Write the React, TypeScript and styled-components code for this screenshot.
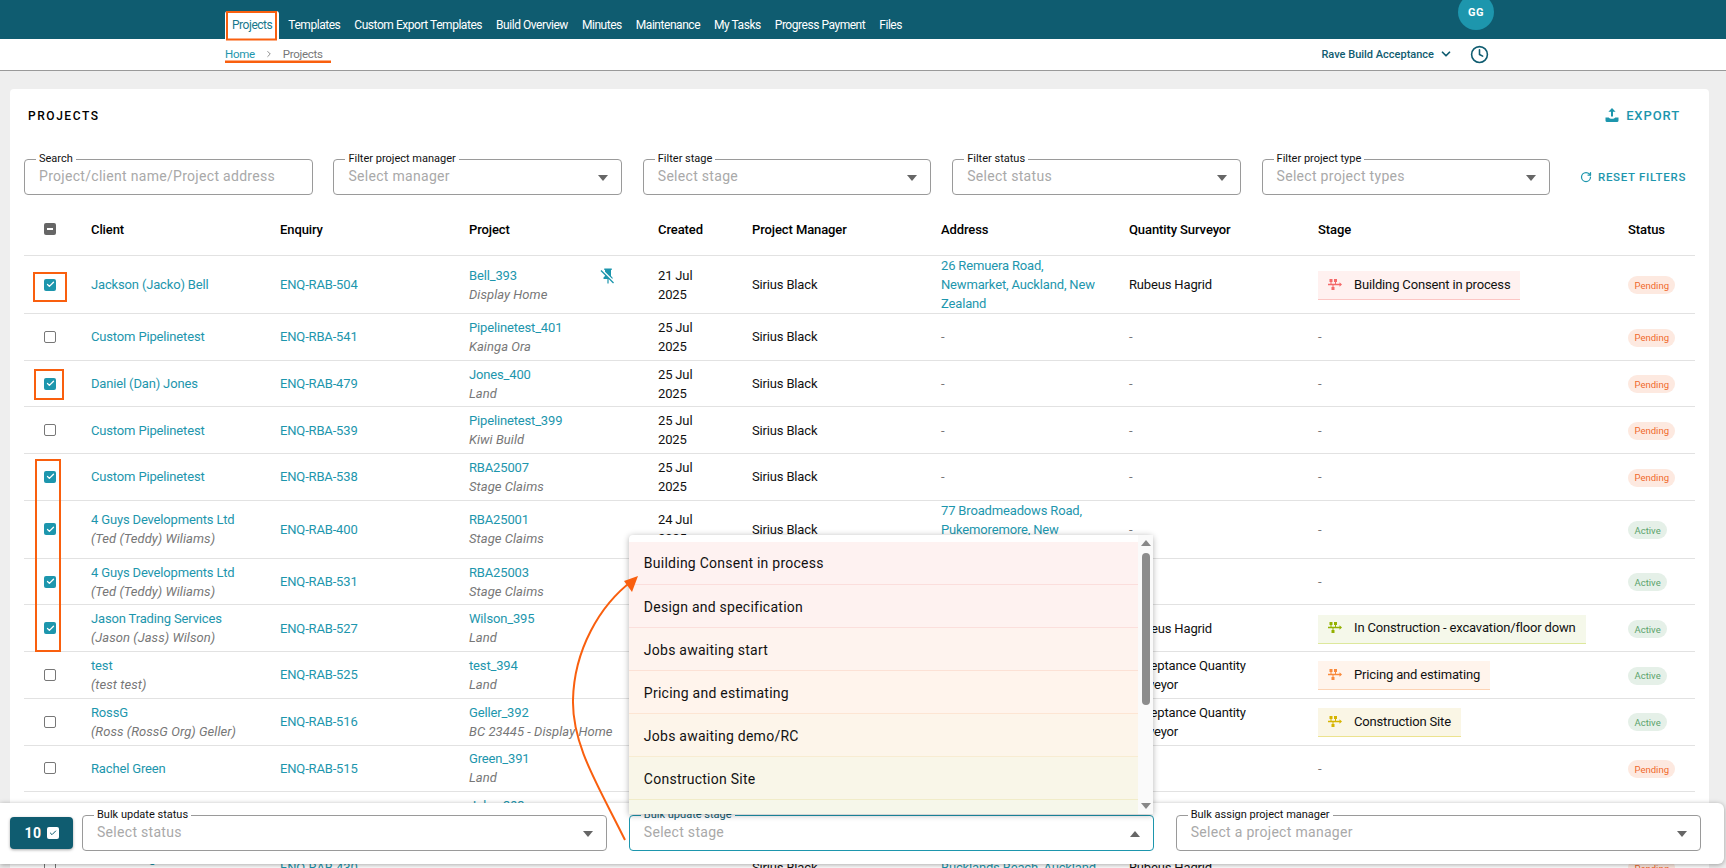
import React from "react";
import styled, { createGlobalStyle, css } from "styled-components";
import { Check, ChevronDown, ChevronRight, Clock, RotateCw } from "lucide-react";

const TEAL = "#1d96ad";
const DARK = "#0f5c70";
const ORANGE = "#f95f0e";

const GlobalStyle = createGlobalStyle`
  html, body { margin: 0; padding: 0; background: #eeeeee; overflow: hidden; }
  body { font-family: Roboto, "Liberation Sans", sans-serif; font-size: 13px; color: #111; }
  * { box-sizing: border-box; }
`;

const Page = styled.div`
  position: relative;
  width: 1726px;
  height: 868px;
  overflow: hidden;
`;

const TopNav = styled.nav`
  display: flex;
  align-items: flex-end;
  height: 39px;
  padding-left: 225px;
  background: ${DARK};
`;

const NavItem = styled.a<{ $active?: boolean }>`
  display: flex;
  align-items: center;
  height: 28px;
  padding: 0 7px;
  font-size: 12px;
  letter-spacing: -0.46px;
  color: #fff;
  border-radius: 3px 3px 0 0;
  ${(p) =>
    p.$active &&
    css`
      background: #fff;
      color: #17788c;
      margin-right: 2px;
    `}
`;

const Avatar = styled.div`
  display: flex;
  align-items: center;
  justify-content: center;
  align-self: flex-start;
  width: 36px;
  height: 36px;
  margin: -6px 232px 0 auto;
  border-radius: 50%;
  background: ${TEAL};
  color: #fff;
  font-size: 11px;
  font-weight: 700;
  letter-spacing: 0.4px;
`;

const SubBar = styled.div`
  display: flex;
  align-items: center;
  height: 32px;
  padding: 0 237px 2px 225px;
  background: #fff;
  border-bottom: 1px solid #999;
`;

const Crumbs = styled.div`
  display: flex;
  align-items: center;
  font-size: 11.5px;
  letter-spacing: -0.3px;
  color: #777;
  svg { margin: 0 9px; color: #777; }
`;

const CrumbLink = styled.a`
  color: ${TEAL};
`;

const Account = styled.div`
  display: flex;
  align-items: center;
  margin: 1px 0 0 auto;
  font-size: 11px;
  font-weight: 500;
  color: ${DARK};
  svg:first-of-type { margin: 0 17px 0 5px; }
`;

const Card = styled.section`
  margin: 18px 17px 0 10px;
  padding: 0 14px;
  background: #fff;
  border-radius: 4px;
`;

const TitleRow = styled.div`
  display: flex;
  align-items: center;
  justify-content: space-between;
  height: 52px;
  padding: 0 15px 0 4px;
`;

const Title = styled.h2`
  margin: 2px 0 0;
  font-size: 12px;
  font-weight: 500;
  letter-spacing: 1.55px;
  color: #000;
`;

const ExportButton = styled.button`
  display: flex;
  align-items: center;
  gap: 7px;
  padding: 0;
  border: 0;
  background: none;
  font: 500 13px Roboto, sans-serif;
  letter-spacing: 0.9px;
  color: ${TEAL};
`;

const Filters = styled.div`
  display: flex;
  align-items: center;
  gap: 20.9px;
  margin-top: 18px;
`;

const Field = styled.div<{ $focus?: boolean; $grow?: boolean }>`
  position: relative;
  display: flex;
  align-items: center;
  justify-content: space-between;
  width: ${(p) => (p.$grow ? "auto" : "288.5px")};
  flex: ${(p) => (p.$grow ? 1 : "none")};
  height: 36px;
  padding: 0 13px 2px 14px;
  border: 1px solid ${(p) => (p.$focus ? TEAL : "#9a9a9a")};
  border-radius: 4px;
  background: #fff;
`;

const FieldLabel = styled.label<{ $focus?: boolean }>`
  position: absolute;
  left: 11px;
  top: -7px;
  padding: 0 3px;
  background: #fff;
  font-size: 11px;
  line-height: 12px;
  color: ${(p) => (p.$focus ? DARK : "#111")};
`;

const Placeholder = styled.span`
  font-size: 14px;
  letter-spacing: 0.3px;
  color: #a9a9a9;
`;

const Caret = styled.span<{ $up?: boolean }>`
  width: 0;
  height: 0;
  margin-top: 3px;
  border-left: 5px solid transparent;
  border-right: 5px solid transparent;
  ${(p) =>
    p.$up
      ? css`border-bottom: 6px solid #666;`
      : css`border-top: 6px solid #666;`}
`;

const ResetButton = styled.button`
  display: flex;
  align-items: center;
  gap: 6px;
  margin-left: 9px;
  padding: 0;
  border: 0;
  background: none;
  font: 500 11.5px Roboto, sans-serif;
  letter-spacing: 0.7px;
  color: ${TEAL};
  white-space: nowrap;
`;

const COLUMNS = "56px 189px 189px 189px 94px 189px 188px 189px 310px 1fr";

const HeadRow = styled.div`
  display: grid;
  grid-template-columns: ${COLUMNS};
  align-items: center;
  height: 53px;
  margin-top: 8px;
  border-bottom: 1px solid #e2e2e2;
  font-weight: 500;
  letter-spacing: -0.1px;
  color: #000;
`;

const Row = styled.div<{ $tall?: boolean }>`
  display: grid;
  grid-template-columns: ${COLUMNS};
  align-items: center;
  min-height: ${(p) => (p.$tall ? "58px" : "46.7px")};
  border-bottom: 1px solid #e2e2e2;
  letter-spacing: -0.16px;
`;

const Cell = styled.div`
  padding: 0 20px 0 11px;
  line-height: 19px;
`;

const BoxCell = styled.div`
  display: flex;
  padding-left: 20px;
`;

const Link = styled.a`
  display: block;
  color: ${TEAL};
`;

const Sub = styled.i`
  display: block;
  letter-spacing: 0.05px;
  color: #777;
`;

const Empty = styled.span`
  color: #777;
`;

const Box = styled.span<{ $state?: "on" | "off" | "mixed" }>`
  display: flex;
  align-items: center;
  justify-content: center;
  width: 12px;
  height: 12px;
  border-radius: 2px;
  color: #fff;
  ${(p) => p.$state === "on" && css`background: ${TEAL};`}
  ${(p) => p.$state === "mixed" && css`background: #666;`}
  ${(p) => p.$state === "off" && css`border: 1.5px solid #777;`}
`;

const Dash = styled.span`
  width: 6px;
  height: 2px;
  background: #fff;
`;

const ProjectCell = styled(Cell)`
  display: flex;
  justify-content: space-between;
  padding-right: 30px;
`;

const PinIcon = styled.svg`
  width: 18px;
  height: 18px;
  margin-top: 1px;
  color: ${TEAL};
  flex: none;
`;

const CreatedCell = styled(Cell)`
  padding-right: 30px;
`;

const StageChip = styled.div<{ $bg: string; $line: string }>`
  display: inline-flex;
  align-items: center;
  gap: 12px;
  height: 29px;
  margin-top: 2px;
  padding: 0 10px 2px;
  background: ${(p) => p.$bg};
  border-bottom: 1px solid ${(p) => p.$line};
  white-space: nowrap;
`;

const StatusChip = styled.span<{ $active?: boolean }>`
  display: inline-flex;
  align-items: center;
  height: 18px;
  padding: 0 6.5px;
  border-radius: 9px;
  font-size: 9.5px;
  letter-spacing: 0;
  background: ${(p) => (p.$active ? "#e5f0e8" : "#fde9e0")};
  color: ${(p) => (p.$active ? "#5ba36b" : "#f06a2c")};
`;

const BulkBar = styled.div`
  position: absolute;
  left: 0;
  right: 2px;
  top: 803px;
  display: flex;
  align-items: center;
  gap: 21.5px;
  height: 61px;
  padding: 0 23px 1px 10px;
  background: #fff;
  border-radius: 0 6px 6px 0;
  box-shadow: 0 1px 5px rgba(0, 0, 0, 0.35);
`;

const CountButton = styled.button`
  display: flex;
  align-items: center;
  justify-content: center;
  gap: 5px;
  width: 63px;
  height: 32px;
  margin-right: -12.5px;
  padding: 0;
  border: 0;
  border-radius: 4px;
  background: ${DARK};
  box-shadow: 0 1px 3px rgba(0, 0, 0, 0.35);
  font: 700 14px Roboto, sans-serif;
  letter-spacing: 0.5px;
  color: #fff;
`;

const CountBox = styled.span`
  display: flex;
  align-items: center;
  justify-content: center;
  width: 12px;
  height: 12px;
  border-radius: 2px;
  background: #fff;
  color: ${DARK};
`;

const Menu = styled.div`
  position: absolute;
  left: -1px;
  right: 0;
  bottom: 36px;
  display: flex;
  height: 279px;
  padding-top: 7px;
  background: #fff;
  border-radius: 4px 4px 0 0;
  box-shadow: 0 1px 6px rgba(0, 0, 0, 0.3);
  z-index: 2;
`;

const MenuList = styled.ul`
  flex: 1;
  margin: 0;
  padding: 0;
  list-style: none;
  overflow: hidden;
`;

const MenuItem = styled.li<{ $bg: string; $line: string }>`
  display: flex;
  align-items: center;
  height: 43px;
  padding: 2px 0 0 15px;
  background: ${(p) => p.$bg};
  border-bottom: 1px solid ${(p) => p.$line};
  font-size: 14px;
  letter-spacing: 0.25px;
  color: #111;
  &:first-child { padding-top: 0; }
`;

const Scrollbar = styled.div`
  display: flex;
  flex-direction: column;
  align-items: center;
  width: 15px;
  margin-top: -7px;
  padding-top: 5px;
  background: #fafafa;
`;

const ScrollArrow = styled.span<{ $down?: boolean }>`
  width: 0;
  height: 0;
  border-left: 5px solid transparent;
  border-right: 5px solid transparent;
  ${(p) =>
    p.$down
      ? css`border-top: 6px solid #888; margin-top: auto; margin-bottom: 5px;`
      : css`border-bottom: 6px solid #888;`}
`;

const ScrollThumb = styled.span`
  width: 8px;
  height: 152px;
  margin-top: 7px;
  border-radius: 4px;
  background: #8c8c8c;
`;

const Annotations = styled.svg`
  position: absolute;
  inset: 0;
  width: 1726px;
  height: 868px;
  pointer-events: none;
  z-index: 5;
`;

type Stage = { name: string; bg: string; line: string; icon: string };

const stages: Record<string, Stage> = {
  consent: { name: "Building Consent in process", bg: "#fff1f0", line: "#fcc6c4", icon: "#f46a6a" },
  build: { name: "In Construction - excavation/floor down", bg: "#f5f8ea", line: "#dde89c", icon: "#94b000" },
  pricing: { name: "Pricing and estimating", bg: "#fff4ec", line: "#fdd3b4", icon: "#f98a3c" },
  site: { name: "Construction Site", bg: "#faf6e5", line: "#ece38f", icon: "#d6b400" },
};

type Project = {
  checked?: boolean;
  client: string;
  contact?: string;
  enquiry: string;
  project: string;
  type: string;
  pinned?: boolean;
  created: string;
  manager: string;
  address?: string;
  surveyor?: string;
  stage?: Stage;
  active?: boolean;
  tall?: boolean;
};

const rows: Project[] = [
  { checked: true, client: "Jackson (Jacko) Bell", enquiry: "ENQ-RAB-504", project: "Bell_393", type: "Display Home", pinned: true, created: "21 Jul 2025", manager: "Sirius Black", address: "26 Remuera Road, Newmarket, Auckland, New Zealand", surveyor: "Rubeus Hagrid", stage: stages.consent },
  { client: "Custom Pipelinetest", enquiry: "ENQ-RBA-541", project: "Pipelinetest_401", type: "Kainga Ora", created: "25 Jul 2025", manager: "Sirius Black" },
  { checked: true, client: "Daniel (Dan) Jones", enquiry: "ENQ-RAB-479", project: "Jones_400", type: "Land", created: "25 Jul 2025", manager: "Sirius Black" },
  { client: "Custom Pipelinetest", enquiry: "ENQ-RBA-539", project: "Pipelinetest_399", type: "Kiwi Build", created: "25 Jul 2025", manager: "Sirius Black" },
  { checked: true, client: "Custom Pipelinetest", enquiry: "ENQ-RBA-538", project: "RBA25007", type: "Stage Claims", created: "25 Jul 2025", manager: "Sirius Black" },
  { checked: true, client: "4 Guys Developments Ltd", contact: "(Ted (Teddy) Wiliams)", enquiry: "ENQ-RAB-400", project: "RBA25001", type: "Stage Claims", created: "24 Jul 2025", manager: "Sirius Black", address: "77 Broadmeadows Road, Pukemoremore, New Zealand", active: true },
  { checked: true, client: "4 Guys Developments Ltd", contact: "(Ted (Teddy) Wiliams)", enquiry: "ENQ-RAB-531", project: "RBA25003", type: "Stage Claims", created: "24 Jul 2025", manager: "Sirius Black", active: true },
  { checked: true, client: "Jason Trading Services", contact: "(Jason (Jass) Wilson)", enquiry: "ENQ-RAB-527", project: "Wilson_395", type: "Land", created: "24 Jul 2025", manager: "Sirius Black", surveyor: "Rubeus Hagrid", stage: stages.build, active: true },
  { client: "test", contact: "(test test)", enquiry: "ENQ-RAB-525", project: "test_394", type: "Land", created: "24 Jul 2025", manager: "Sirius Black", surveyor: "Acceptance Quantity Surveyor", stage: stages.pricing, active: true },
  { client: "RossG", contact: "(Ross (RossG Org) Geller)", enquiry: "ENQ-RAB-516", project: "Geller_392", type: "BC 23445 - Display Home", created: "24 Jul 2025", manager: "Sirius Black", surveyor: "Acceptance Quantity Surveyor", stage: stages.site, active: true },
  { client: "Rachel Green", enquiry: "ENQ-RAB-515", project: "Green_391", type: "Land", created: "24 Jul 2025", manager: "Sirius Black" },
  { client: "John Luke", enquiry: "ENQ-RAB-512", project: "John_393", type: "Land", created: "24 Jul 2025", manager: "Sirius Black" },
  { client: "Tom Chang", contact: "(Tom Chang)", enquiry: "ENQ-RAB-430", project: "Chan_389", type: "Land", created: "24 Jul 2025", manager: "Sirius Black", address: "Bucklands Beach, Auckland", surveyor: "Rubeus Hagrid", tall: true },
];

const menuItems = [
  { name: "Building Consent in process", bg: "#fef2f1", line: "#fbdedc" },
  { name: "Design and specification", bg: "#fef2f0", line: "#fbdfdc" },
  { name: "Jobs awaiting start", bg: "#fef3ee", line: "#fce1d5" },
  { name: "Pricing and estimating", bg: "#fff4ec", line: "#fde5d3" },
  { name: "Jobs awaiting demo/RC", bg: "#fdf5ea", line: "#f8ecd2" },
  { name: "Construction Site", bg: "#f9f6e8", line: "#f1ecc8" },
  { name: "", bg: "#f6f7ea", line: "#e8edc6" },
];

const navLinks = ["Templates", "Custom Export Templates", "Build Overview", "Minutes", "Maintenance", "My Tasks", "Progress Payment", "Files"];

function StageIcon({ color }: { color: string }) {
  return (
    <svg width="14" height="11" viewBox="0 0 14 11" fill={color}>
      <rect x="1.5" y="0" width="3" height="3" />
      <rect x="6" y="0" width="3" height="3" />
      <rect x="3.5" y="8" width="3" height="3" />
      <path d="M0 4.8h11.5V3.2L14 5.5l-2.5 2.3V6.2H0z" />
      <rect x="2.5" y="2" width="1" height="3" />
      <rect x="7" y="2" width="1" height="3" />
      <rect x="4.5" y="6" width="1" height="3" />
    </svg>
  );
}

function ExportIcon() {
  return (
    <svg width="14" height="14" viewBox="0 0 14 14" fill={TEAL}>
      <path d="M7 0l3.6 3.8H8v4.6H6V3.8H3.4z" />
      <path d="M0.5 9.5h3.2c.6 1 1.8 1.3 3.3 1.3s2.7-.3 3.3-1.3h3.2v3a1.5 1.5 0 0 1-1.5 1.5H2a1.5 1.5 0 0 1-1.5-1.5z" />
    </svg>
  );
}

function Select({ label, placeholder, focus, grow, up, children }: { label: string; placeholder: string; focus?: boolean; grow?: boolean; up?: boolean; children?: React.ReactNode }) {
  return (
    <Field $focus={focus} $grow={grow}>
      <FieldLabel $focus={focus}>{label}</FieldLabel>
      <Placeholder>{placeholder}</Placeholder>
      <Caret $up={up} />
      {children}
    </Field>
  );
}

function CheckBox({ checked }: { checked?: boolean }) {
  return <Box $state={checked ? "on" : "off"}>{checked && <Check size={9} strokeWidth={3.5} />}</Box>;
}

function App() {
  return (
    <Page>
      <GlobalStyle />
      <TopNav>
        <NavItem $active>Projects</NavItem>
        {navLinks.map((name) => (
          <NavItem key={name}>{name}</NavItem>
        ))}
        <Avatar>GG</Avatar>
      </TopNav>
      <SubBar>
        <Crumbs>
          <CrumbLink>Home</CrumbLink>
          <ChevronRight size={10} />
          Projects
        </Crumbs>
        <Account>
          Rave Build Acceptance
          <ChevronDown size={14} strokeWidth={3} />
          <Clock size={19} strokeWidth={2} />
        </Account>
      </SubBar>

      <Card>
        <TitleRow>
          <Title>PROJECTS</Title>
          <ExportButton>
            <ExportIcon />
            EXPORT
          </ExportButton>
        </TitleRow>
        <Filters>
          <Field>
            <FieldLabel>Search</FieldLabel>
            <Placeholder>Project/client name/Project address</Placeholder>
          </Field>
          <Select label="Filter project manager" placeholder="Select manager" />
          <Select label="Filter stage" placeholder="Select stage" />
          <Select label="Filter status" placeholder="Select status" />
          <Select label="Filter project type" placeholder="Select project types" />
          <ResetButton>
            <RotateCw size={12} strokeWidth={2.5} />
            RESET FILTERS
          </ResetButton>
        </Filters>

        <HeadRow>
          <BoxCell>
            <Box $state="mixed">
              <Dash />
            </Box>
          </BoxCell>
          <Cell>Client</Cell>
          <Cell>Enquiry</Cell>
          <Cell>Project</Cell>
          <Cell>Created</Cell>
          <Cell>Project Manager</Cell>
          <Cell>Address</Cell>
          <Cell>Quantity Surveyor</Cell>
          <Cell>Stage</Cell>
          <Cell>Status</Cell>
        </HeadRow>
        {rows.map((row) => (
          <Row key={row.enquiry} $tall={row.tall}>
            <BoxCell>
              <CheckBox checked={row.checked} />
            </BoxCell>
            <Cell>
              <Link>{row.client}</Link>
              {row.contact && <Sub>{row.contact}</Sub>}
            </Cell>
            <Cell>
              <Link>{row.enquiry}</Link>
            </Cell>
            <ProjectCell>
              <div>
                <Link>{row.project}</Link>
                <Sub>{row.type}</Sub>
              </div>
              {row.pinned && (
                <PinIcon viewBox="0 0 24 24" fill="currentColor">
                  <path d="M2,5.27L3.28,4L20,20.72L18.73,22L12.8,16.07V22H11.2V16H6V14L8,12V11.27L2,5.27M16,12L18,14V16H17.82L8,6.18V4H7V2H17V4H16V12Z" />
                </PinIcon>
              )}
            </ProjectCell>
            <CreatedCell>{row.created}</CreatedCell>
            <Cell>{row.manager}</Cell>
            <Cell>{row.address ? <Link>{row.address}</Link> : <Empty>-</Empty>}</Cell>
            <Cell>{row.surveyor ?? <Empty>-</Empty>}</Cell>
            <Cell>
              {row.stage ? (
                <StageChip $bg={row.stage.bg} $line={row.stage.line}>
                  <StageIcon color={row.stage.icon} />
                  {row.stage.name}
                </StageChip>
              ) : (
                <Empty>-</Empty>
              )}
            </Cell>
            <Cell>
              <StatusChip $active={row.active}>{row.active ? "Active" : "Pending"}</StatusChip>
            </Cell>
          </Row>
        ))}
      </Card>

      <BulkBar>
        <CountButton>
          10
          <CountBox>
            <Check size={8} strokeWidth={3} />
          </CountBox>
        </CountButton>
        <Select grow label="Bulk update status" placeholder="Select status" />
        <Select grow focus up label="Bulk update stage" placeholder="Select stage">
          <Menu>
            <MenuList>
              {menuItems.map((item, i) => (
                <MenuItem key={i} $bg={item.bg} $line={item.line}>
                  {item.name}
                </MenuItem>
              ))}
            </MenuList>
            <Scrollbar>
              <ScrollArrow />
              <ScrollThumb />
              <ScrollArrow $down />
            </Scrollbar>
          </Menu>
        </Select>
        <Select grow label="Bulk assign project manager" placeholder="Select a project manager" />
      </BulkBar>

      <Annotations viewBox="0 0 1726 868" fill="none" stroke={ORANGE}>
        <rect x="227" y="12" width="49" height="27.5" strokeWidth="2" />
        <rect x="225" y="60.5" width="106" height="2.5" fill={ORANGE} stroke="none" />
        <rect x="34" y="273" width="32" height="28" strokeWidth="2" />
        <rect x="35" y="370" width="28" height="29" strokeWidth="2" />
        <rect x="36" y="460" width="24" height="191" strokeWidth="2" />
        <path d="M625 840C598 785 572 745 573 700C574 650 600 605 632 581" strokeWidth="2" />
        <path d="M638 576L624 581L632 592Z" fill={ORANGE} stroke="none" />
      </Annotations>
    </Page>
  );
}

export default App;
